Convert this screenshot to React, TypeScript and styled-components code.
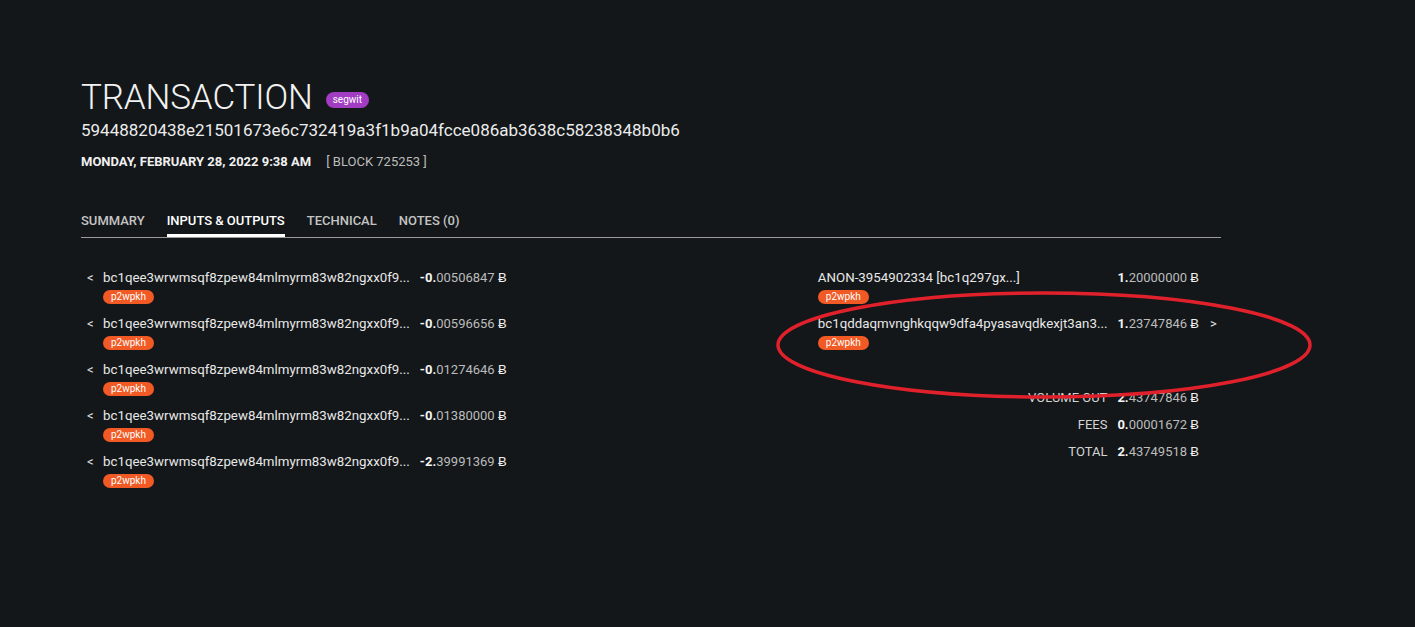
import styled, { createGlobalStyle } from 'styled-components';

const GlobalStyle = createGlobalStyle`
  html, body {
    margin: 0;
    padding: 0;
    background: #131719;
  }
  body {
    font-family: Roboto, "Liberation Sans", sans-serif;
    color: #e6e6e6;
  }
`;

const inputs = [
  { address: 'bc1qee3wrwmsqf8zpew84mlmyrm83w82ngxx0f9...', amount: '-0.00506847' },
  { address: 'bc1qee3wrwmsqf8zpew84mlmyrm83w82ngxx0f9...', amount: '-0.00596656' },
  { address: 'bc1qee3wrwmsqf8zpew84mlmyrm83w82ngxx0f9...', amount: '-0.01274646' },
  { address: 'bc1qee3wrwmsqf8zpew84mlmyrm83w82ngxx0f9...', amount: '-0.01380000' },
  { address: 'bc1qee3wrwmsqf8zpew84mlmyrm83w82ngxx0f9...', amount: '-2.39991369' },
];

const outputs = [
  { label: 'ANON-3954902334 [bc1q297gx...]', amount: '1.20000000', link: false },
  { label: 'bc1qddaqmvnghkqqw9dfa4pyasavqdkexjt3an3...', amount: '1.23747846', link: true },
];

const totals = [
  { label: 'VOLUME OUT', amount: '2.43747846' },
  { label: 'FEES', amount: '0.00001672' },
  { label: 'TOTAL', amount: '2.43749518' },
];

const tabs = ['SUMMARY', 'INPUTS & OUTPUTS', 'TECHNICAL', 'NOTES (0)'];

const Amount = ({ value }: { value: string }) => {
  const dot = value.indexOf('.') + 1;
  return (
    <AmountText>
      <strong>{value.slice(0, dot)}</strong>
      {value.slice(dot)} <Coin>Ƀ</Coin>
    </AmountText>
  );
};

const App = () => {
  return (
    <Page>
      <GlobalStyle />
      <Header>
        <TitleRow>
          <Title>TRANSACTION</Title>
          <Badge $kind="segwit">segwit</Badge>
        </TitleRow>
        <Hash>59448820438e21501673e6c732419a3f1b9a04fcce086ab3638c58238348b0b6</Hash>
        <Meta>
          <span className="date">MONDAY, FEBRUARY 28, 2022 9:38 AM</span>
          <span className="block">[ BLOCK 725253 ]</span>
        </Meta>
      </Header>

      <Tabs>
        {tabs.map((t, i) => (
          <Tab key={t} $active={i === 1}>
            {t}
          </Tab>
        ))}
      </Tabs>

      <Flows>
        <InputList>
          {inputs.map((row, i) => (
            <Row key={i}>
              <Arrow $side="in">&lt;</Arrow>
              <Entry>
                <Address>{row.address}</Address>
                <Badge $kind="script">p2wpkh</Badge>
              </Entry>
              <Amount value={row.amount} />
            </Row>
          ))}
        </InputList>

        <OutputList>
          {outputs.map((row, i) => (
            <Row key={i}>
              <Entry>
                <Address>{row.label}</Address>
                <Badge $kind="script">p2wpkh</Badge>
              </Entry>
              <Amount value={row.amount} />
              <Arrow $side="out">{row.link ? '>' : ''}</Arrow>
            </Row>
          ))}
          {totals.map((t, i) => (
            <Row key={t.label}>
              <TotalLabel $first={i === 0}>{t.label}</TotalLabel>
              <Amount value={t.amount} />
              <span />
            </Row>
          ))}
          {/* red annotation ring drawn over the highlighted output */}
          <Circle viewBox="0 0 540 112" aria-hidden>
            <ellipse cx="268" cy="55" rx="266" ry="52" fill="none" stroke="#e0212b" strokeWidth="3.5" />
          </Circle>
        </OutputList>
      </Flows>
    </Page>
  );
};

export default App;

const Page = styled.div`
  width: 1140px;
  padding: 78px 0 0 81px;
`;

const Header = styled.header`
  display: flex;
  flex-direction: column;
`;

const TitleRow = styled.div`
  display: flex;
  align-items: center;
  gap: 13px;
`;

const Title = styled.h1`
  margin: 0;
  font-size: 35px;
  font-weight: 300;
  line-height: 40px;
  color: #f2f2f2;
  letter-spacing: -0.15px;
`;

const Badge = styled.span<{ $kind: 'segwit' | 'script' }>`
  display: inline-flex;
  align-items: center;
  justify-content: center;
  border-radius: 8px;
  color: #fff;
  font-size: 10px;
  line-height: 1;
  background: ${(p) => (p.$kind === 'segwit' ? '#a23cc3' : '#f15a24')};
  height: ${(p) => (p.$kind === 'segwit' ? '16px' : '14px')};
  padding: ${(p) => (p.$kind === 'segwit' ? '0 7px' : '0 8px')};
  margin-top: ${(p) => (p.$kind === 'segwit' ? '4px' : '3px')};
  align-self: ${(p) => (p.$kind === 'segwit' ? 'center' : 'flex-start')};
`;

const Hash = styled.div`
  font-size: 17px;
  line-height: 22px;
  color: #ececec;
  margin-top: 1px;
`;

const Meta = styled.div`
  display: flex;
  gap: 15px;
  margin-top: 13px;
  font-size: 13px;
  line-height: 16px;

  .date {
    font-weight: 700;
    color: #f0f0f0;
  }
  .block {
    color: #bdbdbd;
  }
`;

const Tabs = styled.nav`
  display: flex;
  gap: 22px;
  margin-top: 43px;
  border-bottom: 1px solid #9a9a9a;
`;

const Tab = styled.div<{ $active: boolean }>`
  font-size: 13px;
  font-weight: 500;
  line-height: 16px;
  padding-bottom: 5px;
  color: ${(p) => (p.$active ? '#ffffff' : '#c4c4c4')};
  border-bottom: 3px solid ${(p) => (p.$active ? '#ffffff' : 'transparent')};
`;

const Flows = styled.section`
  display: flex;
  justify-content: space-between;
  margin-top: 31px;
`;

const InputList = styled.div`
  display: grid;
  grid-template-columns: 22px auto auto;
  row-gap: 9px;
  align-content: start;
`;

const OutputList = styled.div`
  position: relative;
  display: grid;
  grid-template-columns: auto auto 22px;
  row-gap: 9px;
  align-content: start;
`;

const Row = styled.div`
  display: contents;
`;

const Arrow = styled.span<{ $side: 'in' | 'out' }>`
  font-size: 13px;
  line-height: 18px;
  color: #e6e6e6;
  align-self: start;
  padding-left: ${(p) => (p.$side === 'in' ? '6px' : '11px')};
`;

const Entry = styled.div`
  display: flex;
  flex-direction: column;
  padding-bottom: 2px;
`;

const Address = styled.span`
  font-size: 13.3px;
  line-height: 18px;
  color: #e8e8e8;
  white-space: nowrap;
`;

const AmountText = styled.span`
  font-size: 13px;
  line-height: 18px;
  color: #bcbcbc;
  white-space: nowrap;
  align-self: start;
  margin-left: 10px;

  strong {
    color: #f4f4f4;
    font-weight: 700;
  }
`;

const Coin = styled.span`
  color: #f0f0f0;
`;

const TotalLabel = styled.span<{ $first: boolean }>`
  justify-self: end;
  font-size: 13px;
  line-height: 18px;
  color: #d4d4d4;
  margin-top: ${(p) => (p.$first ? '28px' : '0')};
  & + span {
    margin-top: ${(p) => (p.$first ? '28px' : '0')};
  }
`;

const Circle = styled.svg`
  position: absolute;
  left: -42px;
  top: 21px;
  width: 540px;
  height: 112px;
  overflow: visible;
  pointer-events: none;
`;
